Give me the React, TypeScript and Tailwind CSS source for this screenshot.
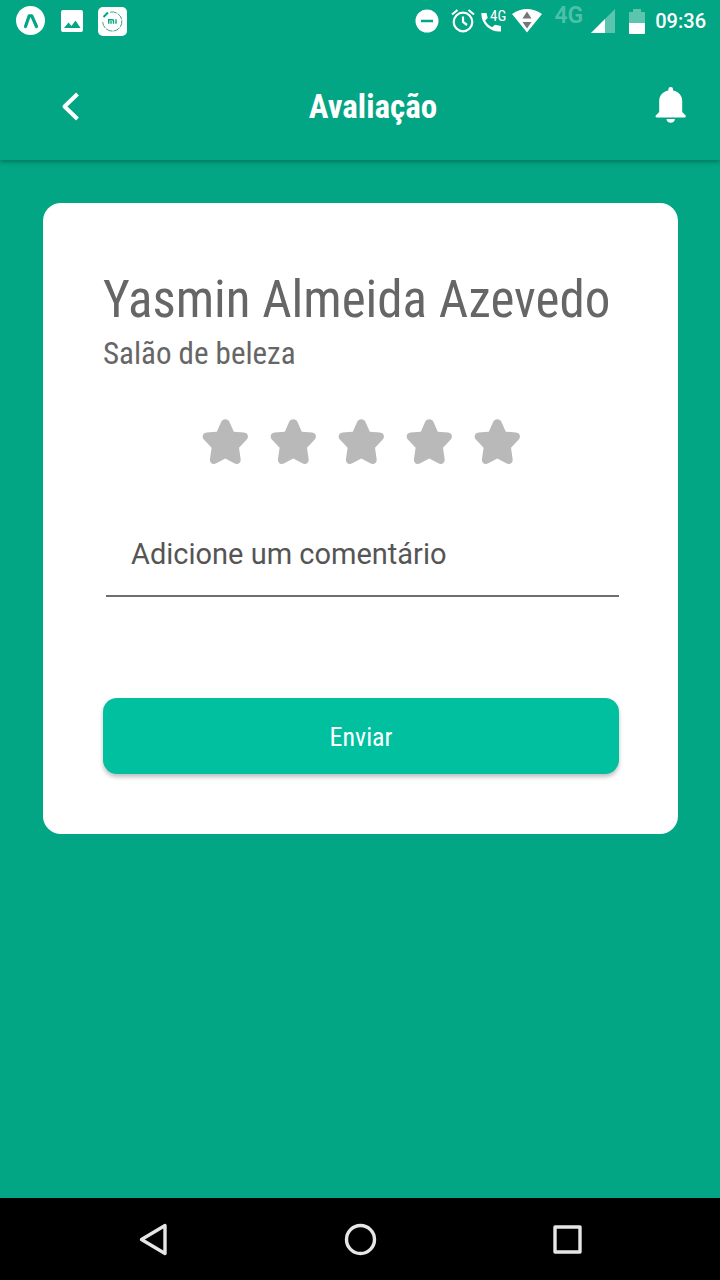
import React, { useState } from "react";

const condensed = "font-['Roboto_Condensed','Roboto',sans-serif]";

function StatusBar() {
  return (
    <div className="flex h-10 items-center justify-between pl-4 pr-3.5 pt-0.5 text-white">
      <div className="flex items-center">
        <svg width="30" height="30" viewBox="0 0 30 30" aria-hidden="true">
          <circle cx="14.5" cy="14.5" r="14.5" fill="currentColor" />
          <path d="M9.500 20.500 13.200 9.800h2.600L20.500 20.500" fill="none" stroke="#02a584" strokeWidth="3.200" strokeLinejoin="round" strokeLinecap="round" />
        </svg>
        <svg className="ml-[15px]" width="22" height="22" viewBox="0 0 22 22" aria-hidden="true">
          <rect width="22" height="22" rx="2" fill="currentColor" />
          <path d="m3 18 4.500-5.500 3 3.500 4-5.500L19.500 18Z" fill="#02a584" />
        </svg>
        <svg className="ml-[15px]" width="29" height="29" viewBox="0 0 29 29" aria-hidden="true">
          <rect width="29" height="29" rx="5" fill="currentColor" />
          <path d="M12 5.200a9.600 9.600 0 1 1-7.300 9.800" fill="none" stroke="#4b9f8c" strokeWidth="1" strokeDasharray="7 1" />
          <path d="m5.500 10 4.500-4.500" stroke="#02a584" strokeWidth="2" />
          <path d="M10.700 16.800v-4h3.800q1 0 1 1v3M13 14v2.800M18 12.200v4.600" fill="none" stroke="#02a584" strokeWidth="1.400" />
        </svg>
      </div>
      <div className="flex items-center">
        <svg width="24" height="24" viewBox="0 0 24 24" aria-hidden="true">
          <circle cx="12" cy="12" r="11.500" fill="currentColor" />
          <path d="M6 12h12" stroke="#02a584" strokeWidth="2.500" />
        </svg>
        <svg className="ml-3" width="24" height="24" viewBox="0 0 24 24" fill="none" stroke="currentColor" strokeWidth="2.200" aria-hidden="true">
          <circle cx="12" cy="13" r="9.300" />
          <path d="M12 7.500V13l4 3M1 5.500l5.500-4.500M23 5.500l-5.500-4.500" />
        </svg>
        <svg className="ml-1.5" width="27" height="28" viewBox="0 0 27 28" aria-hidden="true">
          <path d="M.5 6h5l1.200 5-2.500 2.600c1.500 3.200 4 5.200 7 6.700l2.700-2.500 6.100 1.200v5.500C9 25.500-.5 16 .5 6Z" fill="currentColor" />
          <text x="9" y="14" fill="currentColor" className="font-['Roboto_Condensed','Roboto',sans-serif] text-[15px]">4G</text>
        </svg>
        <svg className="ml-1" width="30" height="24" viewBox="0 0 30 24" aria-hidden="true">
          <path d="M0 5Q15-5 30 5L15 23.500Z" fill="currentColor" />
          <path d="m10.500 9.500 4.500-7 4.500 7Zm0 3.500h9L15 19.500Z" fill="#777" />
        </svg>
        <span className="ml-3 pb-2.5 font-['Roboto',sans-serif] text-[23px] font-semibold leading-6 text-[#4dc0a8]">4G</span>
        <svg className="ml-2" width="24" height="24" viewBox="0 0 24 24" aria-hidden="true">
          <path d="M24 0v24H0Z" fill="#5cc5ae" />
          <path d="M14 10v14H0Z" fill="currentColor" />
        </svg>
        <svg className="ml-3.5" width="16" height="25" viewBox="0 0 16 25" aria-hidden="true">
          <path d="M0 14V3.500Q0 3 1 3h3V0h8v3h3q1 0 1 1v10Z" fill="#5cc5ae" />
          <path d="M0 14h16v10q0 1-1 1H1q-1 0-1-1Z" fill="currentColor" />
        </svg>
        <span className="ml-2.5 font-['Roboto',sans-serif] text-[20px] font-medium leading-6">09:36</span>
      </div>
    </div>
  );
}

function Header() {
  return (
    <header className="shadow-[0_2px_4px_rgba(0,0,0,0.28)]">
      <StatusBar />
      <div className="flex h-[120px] items-center justify-between pl-14 pr-8 pt-3 text-white">
        <button type="button" aria-label="Voltar" className="p-1">
          <svg width="24" height="32" viewBox="0 0 24 32" fill="none" stroke="currentColor" strokeWidth="4" strokeLinejoin="round">
            <path d="M17.500 4 4.500 16.500l13 12.500" />
          </svg>
        </button>
        <h1 className={"pl-1 pt-0.5 text-[33px] font-bold leading-10 " + condensed}>Avaliação</h1>
        <button type="button" aria-label="Notificações">
          <svg width="34" height="40" viewBox="-2 -1 34 40" fill="currentColor">
            <path d="M14.700 0a2.400 2.400 0 0 1 2.400 2.400v1C23 4.600 26.200 8.500 26.200 14v11l3.200 3.200c1 1 .4 2.200-.8 2.200H.8c-1.200 0-1.800-1.200-.8-2.200L3.200 25V14c0-5.500 3.200-9.400 9.100-10.600v-1A2.400 2.400 0 0 1 14.700 0ZM10.500 32h8.400c0 2.200-1.900 3.800-4.200 3.800S10.500 34.200 10.500 32Z" />
          </svg>
        </button>
      </div>
    </header>
  );
}

function Rating() {
  const [rating, setRating] = useState(0);
  return (
    <div role="group" aria-label="Nota" className="mt-[45px] flex justify-center gap-[22px]">
      {[1, 2, 3, 4, 5].map((n) => (
        <button
          key={n}
          type="button"
          aria-label={n + " de 5"}
          onClick={() => setRating(n)}
          className={n <= rating ? "text-[#f5b301]" : "text-[#b9b9b9]"}
        >
          <svg width="46" height="46" viewBox="0 0 46 46" fill="currentColor">
            <path d="M19.100 3C20.500-.8 26.100-.8 27.500 3L31.800 12.700 42 13.500C46.100 14 47.100 18 44.500 20.700L37 28.800 38.700 40.500C38.900 44.500 35.500 46.100 32.300 44.300L23.300 39.500 14.300 44.300C11.100 46.100 7.700 44.500 7.900 40.500L9.600 28.800 2.100 20.700C-.5 18 .5 14 4.600 13.500L14.800 12.700Z" />
          </svg>
        </button>
      ))}
    </div>
  );
}

function NavigationBar() {
  return (
    <nav className="flex h-[82px] items-center justify-around bg-black px-[50px] text-[#e6e6e6]">
      <button type="button" aria-label="Voltar à tela anterior">
        <svg width="34" height="34" viewBox="0 0 34 34" fill="none" stroke="currentColor" strokeWidth="3.400" strokeLinejoin="round">
          <path d="M29 3.500v28L5.500 17.500Z" />
        </svg>
      </button>
      <button type="button" aria-label="Início">
        <svg width="34" height="34" viewBox="0 0 34 34" fill="none" stroke="currentColor" strokeWidth="3.400">
          <circle cx="17.500" cy="17.500" r="14" />
        </svg>
      </button>
      <button type="button" aria-label="Aplicativos recentes">
        <svg width="34" height="34" viewBox="0 0 34 34" fill="none" stroke="currentColor" strokeWidth="3.400" strokeLinejoin="round">
          <rect x="5" y="5" width="25" height="25" />
        </svg>
      </button>
    </nav>
  );
}

export default function App() {
  return (
    <div className="flex min-h-screen flex-col bg-[#02a584]">
      <Header />
      <main className="flex-1 pl-[43px] pr-[42px] pt-[43px]">
        <form
          onSubmit={(e) => e.preventDefault()}
          className="flex flex-col rounded-[18px] bg-white pb-[60px] pl-[60px] pr-[59px] pt-[65px] text-[#666]"
        >
          <h2 className={"whitespace-nowrap pb-0.5 text-[51px] leading-[64px] " + condensed}>Yasmin Almeida Azevedo</h2>
          <p className={"text-[31px] leading-10 " + condensed}>Salão de beleza</p>
          <Rating />
          <input
            type="text"
            aria-label="Adicione um comentário"
            placeholder="Adicione um comentário"
            className="ml-[3px] mt-12 h-[84px] border-b-2 border-[#6e6e6e] px-[25px] font-['Roboto',sans-serif] text-[29px] text-[#555] outline-none placeholder:text-[#555] placeholder:opacity-100"
          />
          <button
            type="submit"
            className={"mt-[101px] h-[76px] rounded-[14px] bg-[#01c0a0] pt-0.5 text-[26px] text-white shadow-[0_3px_4px_rgba(0,0,0,0.25)] " + condensed}
          >
            Enviar
          </button>
        </form>
      </main>
      <NavigationBar />
    </div>
  );
}
